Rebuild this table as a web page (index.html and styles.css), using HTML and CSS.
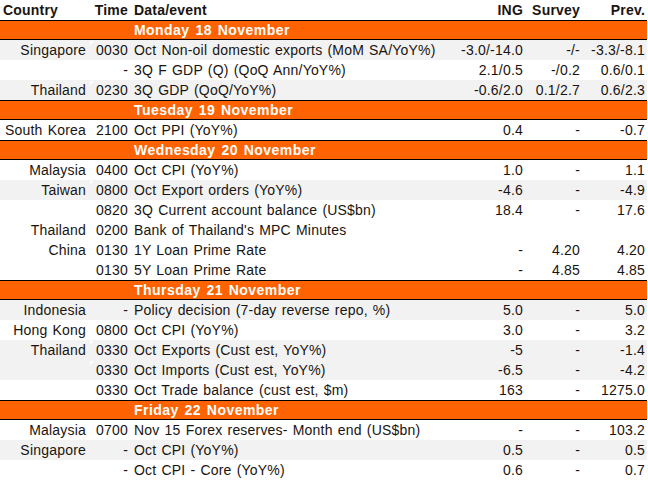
FILE: index.html
```html
<!DOCTYPE html>
<html>
<head>
<meta charset="utf-8">
<link rel="stylesheet" href="styles.css">
</head>
<body>
<div class="sheet">
  <div class="row head">
    <div class="c country left">Country</div><div class="c time">Time</div><div class="c event">Data/event</div><div class="c num">ING</div><div class="c num">Survey</div><div class="c num">Prev.</div>
  </div>

  <div class="row day"><div class="c"></div><div class="c"></div><div class="c event">Monday 18 November</div></div>
  <div class="row grey"><div class="c country">Singapore</div><div class="c time tri">0030</div><div class="c event">Oct Non-oil domestic exports (MoM SA/YoY%)</div><div class="c num">-3.0/-14.0</div><div class="c num">-/-</div><div class="c num">-3.3/-8.1</div></div>
  <div class="row"><div class="c country"></div><div class="c time">-</div><div class="c event">3Q F GDP (Q) (QoQ Ann/YoY%)</div><div class="c num">2.1/0.5</div><div class="c num">-/0.2</div><div class="c num">0.6/0.1</div></div>
  <div class="row grey"><div class="c country">Thailand</div><div class="c time tri">0230</div><div class="c event">3Q GDP (QoQ/YoY%)</div><div class="c num">-0.6/2.0</div><div class="c num">0.1/2.7</div><div class="c num">0.6/2.3</div></div>

  <div class="row day"><div class="c"></div><div class="c"></div><div class="c event">Tuesday 19 November</div></div>
  <div class="row"><div class="c country">South Korea</div><div class="c time">2100</div><div class="c event">Oct PPI (YoY%)</div><div class="c num">0.4</div><div class="c num">-</div><div class="c num">-0.7</div></div>

  <div class="row day"><div class="c"></div><div class="c"></div><div class="c event">Wednesday 20 November</div></div>
  <div class="row"><div class="c country">Malaysia</div><div class="c time">0400</div><div class="c event">Oct CPI (YoY%)</div><div class="c num">1.0</div><div class="c num">-</div><div class="c num">1.1</div></div>
  <div class="row grey"><div class="c country">Taiwan</div><div class="c time tri">0800</div><div class="c event">Oct Export orders (YoY%)</div><div class="c num">-4.6</div><div class="c num">-</div><div class="c num">-4.9</div></div>
  <div class="row"><div class="c country"></div><div class="c time">0820</div><div class="c event">3Q Current account balance (US$bn)</div><div class="c num">18.4</div><div class="c num">-</div><div class="c num">17.6</div></div>
  <div class="row"><div class="c country">Thailand</div><div class="c time">0200</div><div class="c event">Bank of Thailand's MPC Minutes</div><div class="c num"></div><div class="c num"></div><div class="c num"></div></div>
  <div class="row"><div class="c country">China</div><div class="c time">0130</div><div class="c event">1Y Loan Prime Rate</div><div class="c num">-</div><div class="c num">4.20</div><div class="c num">4.20</div></div>
  <div class="row"><div class="c country"></div><div class="c time">0130</div><div class="c event">5Y Loan Prime Rate</div><div class="c num">-</div><div class="c num">4.85</div><div class="c num">4.85</div></div>

  <div class="row day"><div class="c"></div><div class="c"></div><div class="c event">Thursday 21 November</div></div>
  <div class="row grey"><div class="c country">Indonesia</div><div class="c time">-</div><div class="c event">Policy decision (7-day reverse repo, %)</div><div class="c num">5.0</div><div class="c num">-</div><div class="c num">5.0</div></div>
  <div class="row"><div class="c country">Hong Kong</div><div class="c time">0800</div><div class="c event">Oct CPI (YoY%)</div><div class="c num">3.0</div><div class="c num">-</div><div class="c num">3.2</div></div>
  <div class="row grey"><div class="c country">Thailand</div><div class="c time tri">0330</div><div class="c event">Oct Exports (Cust est, YoY%)</div><div class="c num">-5</div><div class="c num">-</div><div class="c num">-1.4</div></div>
  <div class="row grey"><div class="c country"></div><div class="c time tri">0330</div><div class="c event">Oct Imports (Cust est, YoY%)</div><div class="c num">-6.5</div><div class="c num">-</div><div class="c num">-4.2</div></div>
  <div class="row"><div class="c country"></div><div class="c time">0330</div><div class="c event">Oct Trade balance (cust est, $m)</div><div class="c num">163</div><div class="c num">-</div><div class="c num">1275.0</div></div>

  <div class="row day"><div class="c"></div><div class="c"></div><div class="c event">Friday 22 November</div></div>
  <div class="row"><div class="c country">Malaysia</div><div class="c time">0700</div><div class="c event">Nov 15 Forex reserves- Month end (US$bn)</div><div class="c num">-</div><div class="c num">-</div><div class="c num">103.2</div></div>
  <div class="row grey"><div class="c country">Singapore</div><div class="c time">-</div><div class="c event">Oct CPI (YoY%)</div><div class="c num">0.5</div><div class="c num">-</div><div class="c num">0.5</div></div>
  <div class="row"><div class="c country"></div><div class="c time">-</div><div class="c event">Oct CPI - Core (YoY%)</div><div class="c num">0.6</div><div class="c num">-</div><div class="c num">0.7</div></div>
</div>
</body>
</html>
```

FILE: styles.css
```css
html, body {
  margin: 0;
  padding: 0;
  background: #ffffff;
}

.sheet {
  width: 647px;
  font-family: "Liberation Sans", Arial, sans-serif;
  font-size: 14px;
  letter-spacing: 0.2px;
  word-spacing: 1px;
  color: #1a1410;
}

.row {
  display: grid;
  grid-template-columns: 90px 40px 340px 55px 57px 65px;
  height: 20px;
  box-sizing: border-box;
}

.c {
  display: flex;
  align-items: center;
  line-height: 20px;
  white-space: nowrap;
  position: relative;
}

.country {
  justify-content: flex-end;
  padding-right: 4px;
}

.country.left {
  justify-content: flex-start;
  padding-left: 3px;
  padding-right: 0;
}

.time {
  justify-content: flex-end;
  padding-right: 2px;
}

.event {
  justify-content: flex-start;
  padding-left: 4px;
}

.num {
  justify-content: flex-end;
  padding-right: 2px;
}

.head .c {
  font-weight: bold;
}

.grey {
  background: #f2f2f2;
}

.day {
  background: #ff6200;
  border-top: 1px solid #000;
  border-bottom: 1px solid #000;
}

.day .c {
  line-height: 18px;
  color: #ffffff;
  font-weight: bold;
  letter-spacing: 0.45px;
  word-spacing: 1.5px;
}

.tri::before {
  content: "";
  position: absolute;
  left: 0;
  top: 1px;
  width: 0;
  height: 0;
  border-top: 4px solid #ffffff;
  border-right: 4px solid transparent;
}
```
